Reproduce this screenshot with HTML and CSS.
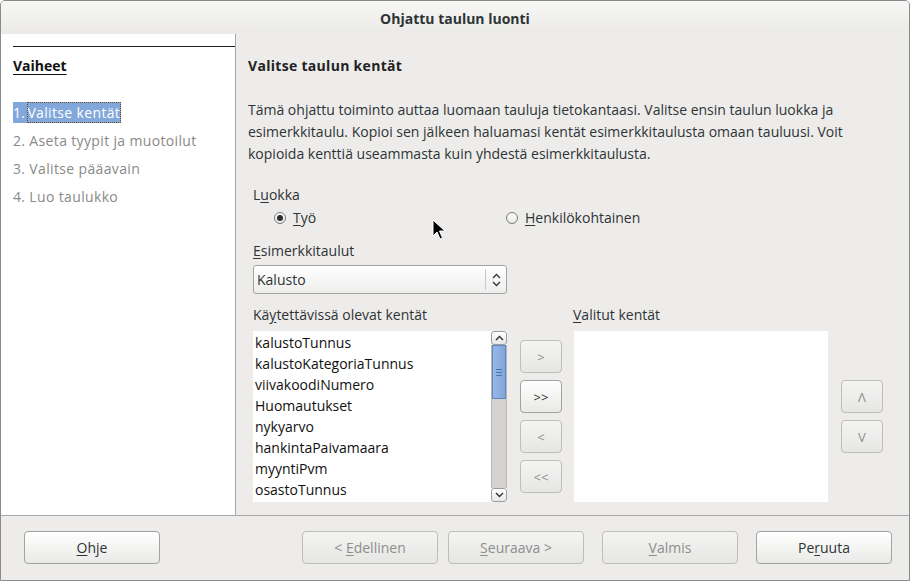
FILE: index.html
```html
<!DOCTYPE html>
<html lang="fi">
<head>
  <meta charset="UTF-8">
  <title>Ohjattu taulun luonti</title>
  <link rel="stylesheet" href="styles.css">
</head>
<body>
  <div class="window">
    <div class="titlebar">Ohjattu taulun luonti</div>

    <div class="main">
      <div class="steps">
        <div class="steps-inner">
          <div class="steps-title">Vaiheet</div>
          <ul class="step-list">
            <li class="active"><span class="num">1.</span><span class="focus">Valitse kentät</span></li>
            <li>2. Aseta tyypit ja muotoilut</li>
            <li>3. Valitse pääavain</li>
            <li>4. Luo taulukko</li>
          </ul>
        </div>
      </div>

      <div class="content">
        <h2>Valitse taulun kentät</h2>
        <p class="intro">Tämä ohjattu toiminto auttaa luomaan tauluja tietokantaasi. Valitse ensin taulun luokka ja esimerkkitaulu. Kopioi sen jälkeen haluamasi kentät esimerkkitaulusta omaan tauluusi. Voit kopioida kenttiä useammasta kuin yhdestä esimerkkitaulusta.</p>

        <div class="form">
          <div class="label">L<u>u</u>okka</div>
          <div class="radios">
            <label class="radio"><span class="dot checked"></span><u>T</u>yö</label>
            <label class="radio"><span class="dot"></span><u>H</u>enkilökohtainen</label>
          </div>

          <div class="label label-gap"><u>E</u>simerkkitaulut</div>
          <div class="select">
            <span class="select-text">Kalusto</span>
            <span class="select-arrows">
              <svg width="9" height="14" viewBox="0 0 9 14"><path d="M1 5 L4.5 1.5 L8 5 M1 9 L4.5 12.5 L8 9" fill="none" stroke="#333" stroke-width="1.3"/></svg>
            </span>
          </div>

          <div class="fields">
            <div class="label">Kä<u>y</u>tettävissä olevat kentät</div>
            <div></div>
            <div class="label"><u>V</u>alitut kentät</div>
            <div></div>

            <div class="listbox">
              <ul class="items">
                <li>kalustoTunnus</li>
                <li>kalustoKategoriaTunnus</li>
                <li>viivakoodiNumero</li>
                <li>Huomautukset</li>
                <li>nykyarvo</li>
                <li>hankintaPaivamaara</li>
                <li>myyntiPvm</li>
                <li>osastoTunnus</li>
              </ul>
              <div class="scrollbar">
                <div class="sb-btn">
                  <svg width="9" height="6" viewBox="0 0 9 6"><path d="M1 5 L4.5 1.5 L8 5" fill="none" stroke="#333" stroke-width="1.4"/></svg>
                </div>
                <div class="sb-trough">
                  <div class="sb-thumb"><span></span><span></span><span></span></div>
                </div>
                <div class="sb-btn">
                  <svg width="9" height="6" viewBox="0 0 9 6"><path d="M1 1 L4.5 4.5 L8 1" fill="none" stroke="#333" stroke-width="1.4"/></svg>
                </div>
              </div>
            </div>

            <div class="move-col">
              <button class="btn small" disabled>&gt;</button>
              <button class="btn small">&gt;&gt;</button>
              <button class="btn small" disabled>&lt;</button>
              <button class="btn small" disabled>&lt;&lt;</button>
            </div>

            <div class="listbox empty"></div>

            <div class="order-col">
              <button class="btn small" disabled>&#923;</button>
              <button class="btn small" disabled>V</button>
            </div>
          </div>
        </div>
      </div>
    </div>

    <div class="footer">
      <button class="btn wide"><u>O</u>hje</button>
      <div class="footer-right">
        <button class="btn wide" disabled>&lt; <u>E</u>dellinen</button>
        <button class="btn wide" disabled><u>S</u>euraava &gt;</button>
        <button class="btn wide gap" disabled><u>V</u>almis</button>
        <button class="btn wide gap">Pe<u>r</u>uuta</button>
      </div>
    </div>

    <svg class="cursor" width="14" height="22" viewBox="0 0 14 22">
      <path d="M1 1 L1 17 L5 13 L8 20 L10.5 19 L7.5 12 L13 12 Z" fill="#000" stroke="#fff" stroke-width="1"/>
    </svg>
  </div>
</body>
</html>
```

FILE: styles.css
```css
* {
  box-sizing: border-box;
}
body {
  margin: 0;
  font-family: 'Open Sans', 'Noto Sans', sans-serif;
  font-size: 14px;
  color: #2e3436;
  background: #fff;
}
u {
  text-decoration: underline;
  text-underline-offset: 2px;
}
.window {
  position: relative;
  width: 910px;
  height: 581px;
  border: 1px solid #8a8a8a;
  border-radius: 5px 5px 0 0;
  background: #edecea;
  display: flex;
  flex-direction: column;
  overflow: hidden;
}
.titlebar {
  height: 33px;
  line-height: 35px;
  text-align: center;
  font-weight: bold;
  font-size: 14px;
  color: #2e3436;
  background: linear-gradient(#f7f7f6, #ebeae8);
}

/* main area */
.main {
  display: flex;
  height: 481px;
}
.steps {
  width: 235px;
  background: #fff;
  border-right: 1px solid #a6a6a6;
  padding: 12px 0 0 12px;
}
.steps-inner {
  border-top: 1px solid #1e1e1e;
}
.steps-title {
  margin-top: 9px;
  font-weight: bold;
  text-decoration: underline;
  text-underline-offset: 3px;
  line-height: 20px;
  color: #111;
}
.step-list {
  list-style: none;
  margin: 26px 0 0;
  padding: 0;
  letter-spacing: 0.35px;
}
.step-list li {
  height: 28px;
  line-height: 21px;
  color: #8a8a87;
}
.step-list li.active {
  display: inline-block;
  height: 21px;
  margin-bottom: 7px;
  background: #82a7da;
  color: #fff;
}
.step-list .focus {
  display: inline-block;
  margin-left: 2px;
  padding-right: 1px;
  height: 21px;
  outline: 1px dotted #6b4a1e;
  outline-offset: -1px;
}

.content {
  flex: 1;
  padding: 0 0 0 12px;
}
.content h2 {
  margin: 22px 0 0;
  font-size: 14px;
  line-height: 20px;
  letter-spacing: 0.3px;
  color: #222;
}
.intro {
  margin: 23px 0 0;
  width: 600px;
  line-height: 22px;
  font-size: 14px;
}
.form {
  padding-left: 5px;
  margin-top: 20px;
}
.label {
  line-height: 20px;
}
.label-gap {
  margin-top: 13px;
}
.radios {
  display: grid;
  grid-template-columns: 232px auto;
  margin-top: 3px;
  padding-left: 21px;
  line-height: 20px;
}
.radio {
  display: flex;
  align-items: center;
}
.dot {
  width: 12px;
  height: 12px;
  border: 1px solid #7a7a7a;
  border-radius: 50%;
  background: linear-gradient(#fff, #e8e8e6);
  margin-right: 7px;
  position: relative;
}
.dot.checked::after {
  content: "";
  position: absolute;
  left: 2px;
  top: 2px;
  width: 6px;
  height: 6px;
  border-radius: 50%;
  background: #2e2e2e;
}
.select {
  margin-top: 4px;
  width: 254px;
  height: 29px;
  border: 1px solid #a3a3a3;
  border-radius: 3px;
  background: linear-gradient(#fff, #eeeeed);
  display: flex;
  align-items: center;
  justify-content: space-between;
}
.select-text {
  padding-left: 3px;
}
.select-arrows {
  height: 21px;
  width: 21px;
  border-left: 1px solid #c9c9c9;
  display: flex;
  align-items: center;
  justify-content: center;
}

.fields {
  margin-top: 11px;
  display: grid;
  grid-template-columns: 254px 42px 253px 42px;
  column-gap: 13px;
  grid-template-rows: 26px 171px;
}
.fields > .label:nth-child(3) {
  margin-left: -2px;
}
.listbox {
  background: #fff;
  display: flex;
  justify-content: space-between;
}
.listbox.empty {
  margin-left: -1px;
}
.items {
  list-style: none;
  margin: 0;
  padding: 1px 0 0 2px;
}
.items li {
  height: 21px;
  line-height: 21px;
  color: #111;
}
.scrollbar {
  width: 16px;
  display: flex;
  flex-direction: column;
  background: #fff;
}
.sb-btn {
  height: 14px;
  border: 1px solid #9c9c9c;
  border-radius: 3px;
  background: linear-gradient(#fff, #e6e6e4);
  display: flex;
  align-items: center;
  justify-content: center;
}
.sb-trough {
  flex: 1;
  background: #d3d2cf;
  border-left: 1px solid #b9b8b5;
  border-right: 1px solid #b9b8b5;
}
.sb-thumb {
  height: 54px;
  background: linear-gradient(90deg, #97b8e4, #80a6db);
  border: 1px solid #5f87c2;
  display: flex;
  flex-direction: column;
  align-items: center;
  justify-content: center;
  gap: 2px;
}
.sb-thumb span {
  width: 6px;
  height: 1px;
  background: #4d73ab;
}
.move-col,
.order-col {
  display: flex;
  flex-direction: column;
  gap: 7px;
  padding-top: 9px;
}
.order-col {
  padding-top: 49px;
}

/* buttons */
.btn {
  font-family: 'Open Sans', 'Noto Sans', sans-serif;
  font-size: 14px;
  color: #2e3436;
  border: 1px solid #a2a2a0;
  border-radius: 4px;
  background: linear-gradient(#ffffff, #e9e9e7);
  padding: 0;
}
.btn:disabled {
  color: #8e8e8c;
  border-color: #bdbdbb;
  background: linear-gradient(#f4f4f3, #e6e6e4);
}
.btn.small {
  width: 42px;
  height: 33px;
  font-size: 13px;
}
.btn.wide {
  width: 136px;
  height: 33px;
}

.footer {
  flex: 1;
  border-top: 1px solid #a8a8a8;
  display: flex;
  justify-content: space-between;
  padding: 15px 17px 0 23px;
}
.footer-right {
  display: flex;
  gap: 10px;
}
.footer-right .gap {
  margin-left: 8px;
}

.cursor {
  position: absolute;
  left: 431px;
  top: 218px;
}
```
